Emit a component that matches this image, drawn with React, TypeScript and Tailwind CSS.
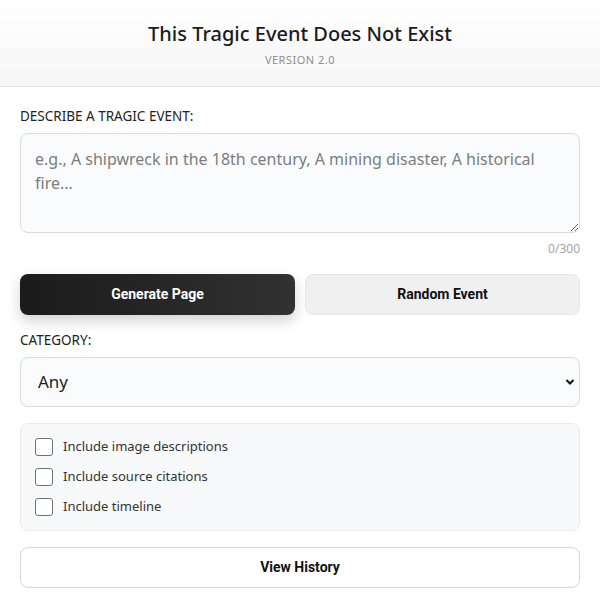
import { useState } from "react";

const body = { fontFamily: '"Noto Sans", "Open Sans", sans-serif' };
const btnFont = { fontFamily: 'Roboto, "Liberation Sans", sans-serif' };

const options = [
  "Include image descriptions",
  "Include source citations",
  "Include timeline",
];

const App = () => {
  const [text, setText] = useState("");
  const [checked, setChecked] = useState<boolean[]>([false, false, false]);

  const toggle = (i: number) =>
    setChecked((c) => c.map((v, j) => (j === i ? !v : v)));

  return (
    <div className="min-h-[600px] w-[600px] bg-white text-[#222]" style={body}>
      <header className="flex h-[87px] flex-col items-center border-b border-[#e4e4e6] bg-gradient-to-b from-white to-[#f6f6f7] pt-[19px]">
        <h1 className="text-[20px] leading-[30px] font-medium text-[#1c1c1c]">
          This Tragic Event Does Not Exist
        </h1>
        <div className="mt-[4px] text-[11px] leading-[14px] tracking-[0.5px] text-[#8e8e8e]">
          VERSION 2.0
        </div>
      </header>

      <main className="px-5 pt-[20px]">
        <label className="block text-[13.5px] leading-[18px] text-[#222]">
          DESCRIBE A TRAGIC EVENT:
        </label>
        <textarea
          value={text}
          onChange={(e) => setText(e.target.value.slice(0, 300))}
          placeholder="e.g., A shipwreck in the 18th century, A mining disaster, A historical fire..."
          className="mt-[8px] block h-[100px] w-full resize-y rounded-lg border border-[#d9dadc] bg-[#fafbfc] px-[14px] pt-[13px] pb-[10px] text-[16px] leading-[24px] text-[#333] placeholder:text-[#7d7d7d] outline-none"
        />
        <div className="mt-[8px] text-right text-[12px] leading-[16px] text-[#a3a3a3]">
          {text.length}/300
        </div>

        <div className="mt-[17px] grid grid-cols-2 gap-[10px]" style={btnFont}>
          <button className="h-[41px] rounded-lg bg-gradient-to-r from-[#1b1b1b] to-[#313131] text-[14px] font-bold text-white shadow-[0_6px_14px_rgba(0,0,0,0.18)]">
            Generate Page
          </button>
          <button className="h-[41px] rounded-lg border border-[#e6e6e6] bg-[#f0f0f0] text-[14px] font-bold text-[#111]">
            Random Event
          </button>
        </div>

        <label className="mt-[16px] block text-[13.5px] leading-[18px] text-[#222]">
          CATEGORY:
        </label>
        <div className="relative mt-[8px]">
          <select className="block h-[50px] w-full appearance-none rounded-lg border border-[#d9dadc] bg-[#fafbfc] pl-[17px] text-[17px] text-[#222] outline-none">
            <option>Any</option>
            <option>Maritime</option>
            <option>Industrial</option>
            <option>Natural Disaster</option>
          </select>
          <svg
            className="pointer-events-none absolute right-[5px] top-[21px]"
            width="10"
            height="8"
            viewBox="0 0 10 8"
          >
            <path d="M1.5 2 5 5.5 8.5 2" fill="none" stroke="#111" strokeWidth="2" />
          </svg>
        </div>

        <div className="mt-[16px] flex flex-col gap-[12px] rounded-lg border border-[#ececee] bg-[#f8f9fb] px-[14px] py-[14px]">
          {options.map((o, i) => (
            <label
              key={o}
              className="flex h-[18px] cursor-pointer items-center gap-[10px] text-[13px] text-[#333]"
              onClick={() => toggle(i)}
            >
              <span className="flex h-[18px] w-[18px] items-center justify-center rounded-[3px] border border-[#707070] bg-white">
                {checked[i] && (
                  <svg width="12" height="12" viewBox="0 0 12 12">
                    <path d="M2 6.5 5 9.5 10 3" fill="none" stroke="#222" strokeWidth="2" />
                  </svg>
                )}
              </span>
              {o}
            </label>
          ))}
        </div>

        <button
          className="mt-[16px] h-[41px] w-full rounded-lg border border-[#d6d6d8] bg-white text-[14px] font-bold text-[#111]"
          style={btnFont}
        >
          View History
        </button>
      </main>
    </div>
  );
};

export default App;
